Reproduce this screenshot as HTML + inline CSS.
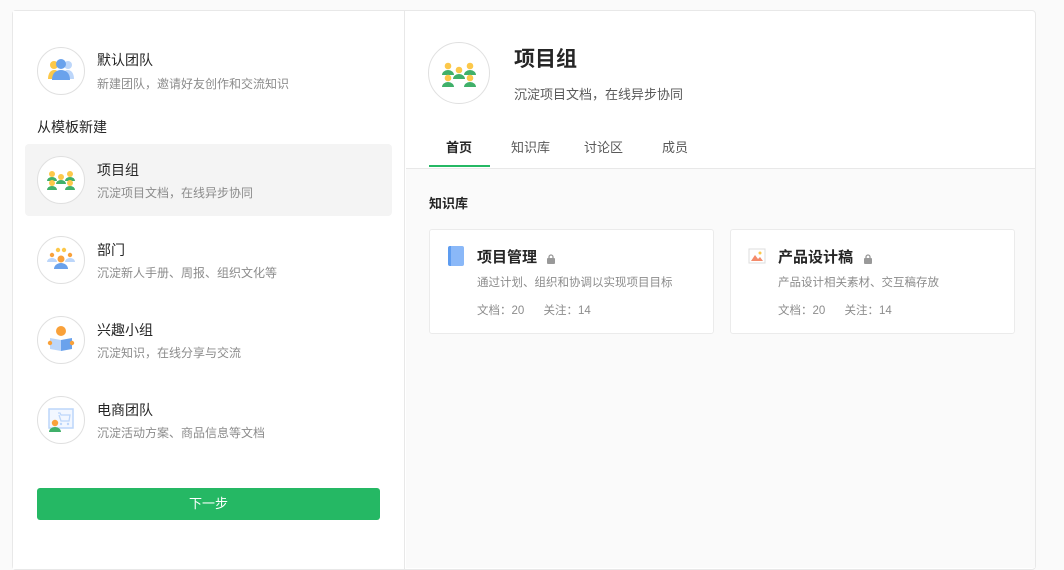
<!DOCTYPE html>
<html><head><meta charset="utf-8"><style>
*{margin:0;padding:0;box-sizing:border-box}
body{width:1064px;height:548px;background:#fafafa;font-family:"Liberation Sans","Noto Sans CJK SC",sans-serif;position:relative;overflow:hidden;color:#262626}
.box{position:absolute;left:12px;top:10px;width:1024px;height:560px;border:1px solid #e8e8e8;border-radius:4px;background:#fff}
.left{position:absolute;left:0;top:0;width:392px;height:100%;border-right:1px solid #e8e8e8;background:#fff}
.abs{position:absolute}
.circ{position:absolute;border:1px solid #e0e0e0;border-radius:50%;background:#fff}
.t{position:absolute;font-size:14px;color:#262626;white-space:nowrap}
.d{position:absolute;font-size:12px;color:#8c8c8c;white-space:nowrap}
</style></head><body>
<div class="box">
<div class="left">
<div class="abs" style="left:12px;top:133px;width:367px;height:72px;background:#f4f4f4;border-radius:4px"></div>
<div class="circ" style="left:24px;top:36px;width:48px;height:48px">
<svg width="46" height="46" viewBox="0 0 46 46"><circle cx="16" cy="17" r="4" fill="#fcc84a"/><path d="M10 31c0-6 3-9 6-9s3 1 3 1v8z" fill="#fcc84a"/><circle cx="30" cy="17" r="4" fill="#bcd6fa"/><path d="M36 31c0-6-3-9-6-9s-3 1-3 1v8z" fill="#bcd6fa"/><circle cx="23" cy="16" r="5" fill="#6aa2ec"/><path d="M14 32c0-7 4-10 9-10s9 3 9 10z" fill="#6aa2ec"/></svg></div>
<div class="t" style="left:84px;top:39px">默认团队</div>
<div class="d" style="left:84px;top:64px">新建团队，邀请好友创作和交流知识</div>
<div class="t" style="left:24px;top:106px">从模板新建</div>
<div class="circ" style="left:24px;top:145px;width:48px;height:48px">
<svg width="46" height="46" viewBox="0 0 46 46" fill="#40b06a"><circle cx="14" cy="17" r="3" fill="#fcc84a"/><path d="M9 24a5 4 0 0 1 10 0z"/><circle cx="32" cy="17" r="3" fill="#fcc84a"/><path d="M27 24a5 4 0 0 1 10 0z"/><circle cx="23" cy="20" r="3" fill="#fcc84a"/><path d="M18 27a5 4 0 0 1 10 0z"/><circle cx="14" cy="26" r="3" fill="#fcc84a"/><path d="M9 33a5 4 0 0 1 10 0z"/><circle cx="32" cy="26" r="3" fill="#fcc84a"/><path d="M27 33a5 4 0 0 1 10 0z"/></svg></div>
<div class="t" style="left:84px;top:149px">项目组</div>
<div class="d" style="left:84px;top:173px">沉淀项目文档，在线异步协同</div>
<div class="circ" style="left:24px;top:225px;width:48px;height:48px">
<svg width="46" height="46" viewBox="0 0 46 46"><circle cx="20" cy="13" r="2.2" fill="#fcc84a"/><circle cx="26" cy="13" r="2.2" fill="#fcc84a"/><circle cx="14" cy="18" r="2.2" fill="#f9a13a"/><circle cx="32" cy="18" r="2.2" fill="#f9a13a"/><path d="M9 25a5 4 0 0 1 10 0z" fill="#bcd6fa"/><path d="M27 25a5 4 0 0 1 10 0z" fill="#bcd6fa"/><circle cx="23" cy="22" r="3.5" fill="#f9a13a"/><path d="M16 32a7 6 0 0 1 14 0z" fill="#6aa2ec"/></svg></div>
<div class="t" style="left:84px;top:229px">部门</div>
<div class="d" style="left:84px;top:253px">沉淀新人手册、周报、组织文化等</div>
<div class="circ" style="left:24px;top:305px;width:48px;height:48px">
<svg width="46" height="46" viewBox="0 0 46 46"><circle cx="23" cy="14" r="5" fill="#f9a13a"/><path d="M12 21l11 2v11l-11-2z" fill="#bcd6fa"/><path d="M34 21l-11 2v11l11-2z" fill="#6aa2ec"/><circle cx="12" cy="26" r="2.2" fill="#f9a13a"/><circle cx="34" cy="26" r="2.2" fill="#f9a13a"/></svg></div>
<div class="t" style="left:84px;top:309px">兴趣小组</div>
<div class="d" style="left:84px;top:333px">沉淀知识，在线分享与交流</div>
<div class="circ" style="left:24px;top:385px;width:48px;height:48px">
<svg width="46" height="46" viewBox="0 0 46 46"><rect x="11" y="12" width="24" height="19" fill="#f2f7ff" stroke="#bcd6fa" stroke-width="1.5"/><path d="M20 16h2l1 2h9l-1 6h-8l-2-6" fill="none" stroke="#bcd6fa" stroke-width="1.3"/><circle cx="23" cy="27" r="1.2" fill="#bcd6fa"/><circle cx="30" cy="27" r="1.2" fill="#bcd6fa"/><circle cx="17" cy="26" r="3.2" fill="#f9a13a"/><path d="M11 35a6 5 0 0 1 12 0z" fill="#40b06a"/></svg></div>
<div class="t" style="left:84px;top:389px">电商团队</div>
<div class="d" style="left:84px;top:413px">沉淀活动方案、商品信息等文档</div>
<div class="abs" style="left:24px;top:477px;width:343px;height:32px;background:#25b864;border-radius:3px;color:#fff;font-size:13px;text-align:center;line-height:31px">下一步</div>
</div>
<div class="abs" style="left:393px;top:157px;width:629px;height:400px;background:#fafafa;border-top:1px solid #e8e8e8"></div>
<div class="circ" style="left:415px;top:31px;width:62px;height:62px">
<svg width="60" height="60" viewBox="0 0 60 60" fill="#40b06a"><circle cx="19" cy="23" r="3.3" fill="#fcc84a"/><path d="M13 32a6 5 0 0 1 12 0z"/><circle cx="41" cy="23" r="3.3" fill="#fcc84a"/><path d="M35 32a6 5 0 0 1 12 0z"/><circle cx="30" cy="27" r="3.3" fill="#fcc84a"/><path d="M24 36a6 5 0 0 1 12 0z"/><circle cx="19" cy="35" r="3.3" fill="#fcc84a"/><path d="M13 44a6 5 0 0 1 12 0z"/><circle cx="41" cy="35" r="3.3" fill="#fcc84a"/><path d="M35 44a6 5 0 0 1 12 0z"/></svg></div>
<div class="abs" style="left:501px;top:32px;font-size:21px;font-weight:bold;color:#262626">项目组</div>
<div class="abs" style="left:501px;top:73px;font-size:13px;color:#595959">沉淀项目文档，在线异步协同</div>
<div class="abs" style="left:433px;top:126px;font-size:13px;color:#262626;font-weight:bold">首页</div>
<div class="abs" style="left:498px;top:126px;font-size:13px;color:#595959">知识库</div>
<div class="abs" style="left:571px;top:126px;font-size:13px;color:#595959">讨论区</div>
<div class="abs" style="left:649px;top:126px;font-size:13px;color:#595959">成员</div>
<div class="abs" style="left:416px;top:154px;width:61px;height:2px;background:#25b864"></div>
<div class="abs" style="left:416px;top:182px;font-size:13px;font-weight:bold;color:#262626">知识库</div>
<div class="abs" style="left:416px;top:218px;width:285px;height:105px;background:#fff;border:1px solid #ebebeb;border-radius:3px">
<div class="abs" style="left:18px;top:16px;width:16px;height:20px;background:#8ab8f8;border-left:3px solid #5d9cf0;border-radius:2px"></div>
<div class="abs" style="left:47px;top:16px;font-size:15px;font-weight:bold">项目管理</div>
<div class="abs" style="left:116px;top:21px;width:10px;height:10px"><svg width="10" height="10"><rect x="1" y="4" width="8" height="6" rx="1" fill="#999"/><path d="M3 4V3a2 2 0 0 1 4 0v1" stroke="#999" fill="none" stroke-width="1.3"/></svg></div>
<div class="abs" style="left:47px;top:44px;font-size:11.5px;color:#8c8c8c">通过计划、组织和协调以实现项目目标</div>
<div class="abs" style="left:47px;top:72px;font-size:11.5px;color:#8c8c8c">文档：20&nbsp;&nbsp;&nbsp;&nbsp;&nbsp;&nbsp;关注：14</div>
</div>
<div class="abs" style="left:717px;top:218px;width:285px;height:105px;background:#fff;border:1px solid #ebebeb;border-radius:3px">
<div class="abs" style="left:17px;top:17px;width:18px;height:18px"><svg width="18" height="18"><rect x="1" y="2" width="16" height="14" fill="#fff" stroke="#ddd"/><path d="M3 14l4-6 3 4 2-2 3 4z" fill="#f48b6b"/><circle cx="12" cy="6" r="1.5" fill="#fcc84a"/></svg></div>
<div class="abs" style="left:47px;top:16px;font-size:15px;font-weight:bold">产品设计稿</div>
<div class="abs" style="left:132px;top:21px;width:10px;height:10px"><svg width="10" height="10"><rect x="1" y="4" width="8" height="6" rx="1" fill="#999"/><path d="M3 4V3a2 2 0 0 1 4 0v1" stroke="#999" fill="none" stroke-width="1.3"/></svg></div>
<div class="abs" style="left:47px;top:44px;font-size:11.5px;color:#8c8c8c">产品设计相关素材、交互稿存放</div>
<div class="abs" style="left:47px;top:72px;font-size:11.5px;color:#8c8c8c">文档：20&nbsp;&nbsp;&nbsp;&nbsp;&nbsp;&nbsp;关注：14</div>
</div>
</div>
</body></html>
